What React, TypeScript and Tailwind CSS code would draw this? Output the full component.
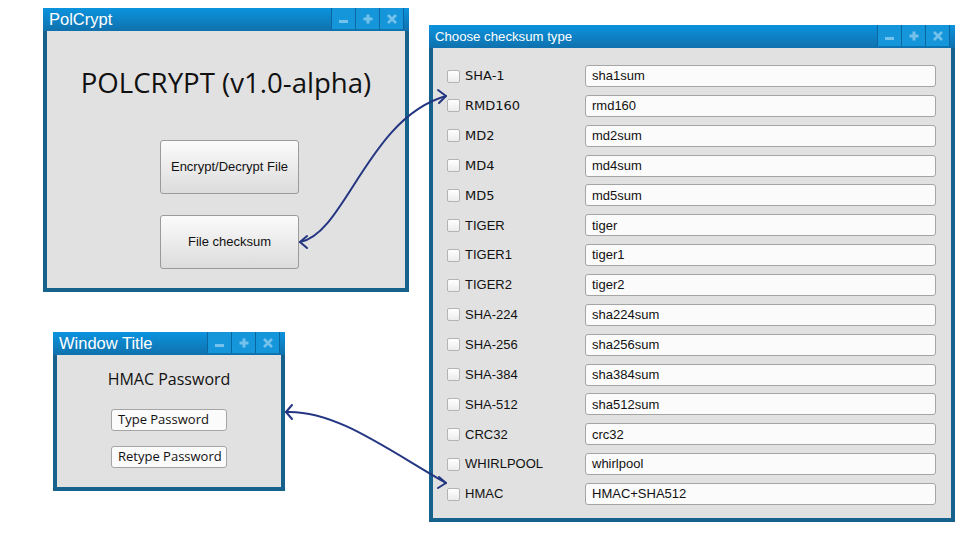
import type { ReactNode } from 'react';

const sans = "font-['Liberation_Sans',Arial,sans-serif]";
const ubuntu = "font-['Open_Sans','Noto_Sans',sans-serif]";

const checksums: { label: string; cmd: string; dejavu?: boolean }[] = [
  { label: 'SHA-1', cmd: 'sha1sum', dejavu: true },
  { label: 'RMD160', cmd: 'rmd160', dejavu: true },
  { label: 'MD2', cmd: 'md2sum', dejavu: true },
  { label: 'MD4', cmd: 'md4sum', dejavu: true },
  { label: 'MD5', cmd: 'md5sum', dejavu: true },
  { label: 'TIGER', cmd: 'tiger' },
  { label: 'TIGER1', cmd: 'tiger1' },
  { label: 'TIGER2', cmd: 'tiger2' },
  { label: 'SHA-224', cmd: 'sha224sum' },
  { label: 'SHA-256', cmd: 'sha256sum' },
  { label: 'SHA-384', cmd: 'sha384sum' },
  { label: 'SHA-512', cmd: 'sha512sum' },
  { label: 'CRC32', cmd: 'crc32' },
  { label: 'WHIRLPOOL', cmd: 'whirlpool' },
  { label: 'HMAC', cmd: 'HMAC+SHA512' },
];

function TitleButtons() {
  return (
    <div className="flex h-[21px] self-start border-l border-[#0b66a0]">
      <div className="flex w-6 items-center justify-center border-r border-[#0b66a0] bg-[#1596da]">
        <div className="mt-[5px] h-[3px] w-[9px] bg-[#74c1ec]" />
      </div>
      <div className="flex w-6 items-center justify-center border-r border-[#0b66a0] bg-[#1596da]">
        <svg width="10" height="10" viewBox="0 0 10 10">
          <path d="M5 0.5v9M0.5 5h9" stroke="#74c1ec" strokeWidth="3" />
        </svg>
      </div>
      <div className="flex w-6 items-center justify-center border-r border-[#0b66a0] bg-[#1596da]">
        <svg width="10" height="10" viewBox="0 0 10 10">
          <path d="M1 1l8 8M9 1l-8 8" stroke="#74c1ec" strokeWidth="2.6" />
        </svg>
      </div>
    </div>
  );
}

function Window({ className, title, titleClass, children }: { className: string; title: string; titleClass: string; children: ReactNode }) {
  return (
    <div className={`absolute flex flex-col bg-[#17628c] ${className}`}>
      <div className="flex h-[23px] items-center justify-between bg-gradient-to-b from-[#0a93de] to-[#0f71ad] pl-[6px] pr-[5px]">
        <span className={`text-white ${sans} ${titleClass}`}>{title}</span>
        <TitleButtons />
      </div>
      <div className="mx-[4px] mb-[4px] flex-1 bg-[#e1e1e1]">{children}</div>
    </div>
  );
}

function Checkbox() {
  return <div className="h-[13px] w-[13px] shrink-0 rounded-[2px] border border-[#b4b4b4] bg-gradient-to-b from-white to-[#ececec]" />;
}

function Button({ children }: { children: ReactNode }) {
  return (
    <div className={`flex h-[54px] w-[139px] items-center justify-center rounded-[3px] border border-[#9a9a9a] bg-gradient-to-b from-[#fbfbfb] to-[#dcdcdc] text-[13px] text-[#111] ${sans}`}>
      {children}
    </div>
  );
}

export default function App() {
  return (
    <div className="relative h-[538px] w-[977px] overflow-hidden bg-white">
      <Window className="left-[43px] top-[8px] h-[284px] w-[366px]" title="PolCrypt" titleClass="text-[16.5px]">
        <div className="flex flex-col">
          <h1 className={`mt-[33px] text-center text-[27.6px] leading-[36px] text-[#111] ${ubuntu}`}>POLCRYPT (v1.0-alpha)</h1>
          <div className="mt-[40px] flex flex-col gap-[21px] pl-[113px]">
            <Button>Encrypt/Decrypt File</Button>
            <Button>File checksum</Button>
          </div>
        </div>
      </Window>

      <Window className="left-[429px] top-[25px] h-[497px] w-[526px]" title="Choose checksum type" titleClass="text-[13.2px]">
        <div className="flex flex-col gap-[7.86px] pl-[14px] pr-[15px] pt-[17px]">
          {checksums.map(c => (
            <div key={c.label} className="flex h-[22px] items-center">
              <Checkbox />
              <span
                className={`ml-[5px] w-[120px] text-[13px] text-[#111] ${c.dejavu ? "font-['DejaVu_Sans',sans-serif]" : sans}`}
              >
                {c.label}
              </span>
              <div className={`flex h-[22px] flex-1 items-center rounded-[3px] border border-[#a5a5a5] bg-[#fbfbfb] pl-[6px] text-[13px] text-[#111] ${sans}`}>
                {c.cmd}
              </div>
            </div>
          ))}
        </div>
      </Window>

      <Window className="left-[53px] top-[332px] h-[159px] w-[232px]" title="Window Title" titleClass="text-[16.5px]">
        <div className="flex flex-col items-center">
          <div className={`mt-[13px] text-[16px] leading-[22px] text-[#111] ${ubuntu}`}>HMAC Password</div>
          <div className={`mt-[19px] flex h-[22px] w-[116px] items-center rounded-[3px] border border-[#a5a5a5] bg-[#fbfbfb] pl-[6px] text-[13px] text-[#111] ${ubuntu}`}>
            Type Password
          </div>
          <div className={`mt-[15px] flex h-[22px] w-[116px] items-center rounded-[3px] border border-[#a5a5a5] bg-[#fbfbfb] pl-[6px] text-[13px] text-[#111] ${ubuntu}`}>
            Retype Password
          </div>
        </div>
      </Window>

      <svg className="pointer-events-none absolute left-0 top-0" width="977" height="538" viewBox="0 0 977 538">
        <g fill="none" stroke="#243682" strokeWidth="2" strokeLinecap="round" strokeLinejoin="round">
          <path d="M300 242 C345 234 368 118 446 96" />
          <path d="M307 236 L300 242 L307 248" />
          <path d="M438 90 L446 96 L439 103" />
          <path d="M286 412 C335 410 385 448 446 483" />
          <path d="M292 405 L286 412 L292 419" />
          <path d="M439 477 L446 483 L438 488" />
        </g>
      </svg>
    </div>
  );
}
